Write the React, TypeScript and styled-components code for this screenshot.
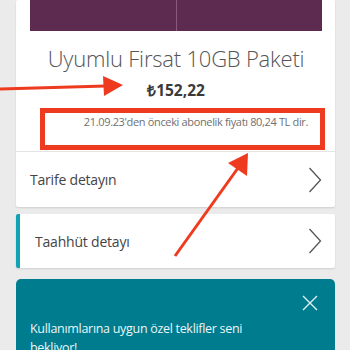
import React from "react";
import styled, { createGlobalStyle } from "styled-components";

const GlobalStyle = createGlobalStyle`
  html, body {
    margin: 0;
    padding: 0;
    background: #ebebeb;
    font-family: "Open Sans", "Liberation Sans", sans-serif;
  }
`;

const Page = styled.div`
  position: relative;
  width: 350px;
  height: 350px;
  overflow: hidden;
  padding: 0 15px 0 16px;
  box-sizing: border-box;
  display: flex;
  flex-direction: column;
`;

const Card = styled.div<{ $accent?: boolean }>`
  background: #fff;
  border-radius: 2px;
  box-shadow: 0 1px 2px rgba(0, 0, 0, 0.12);
  border-left: ${(p) => (p.$accent ? "4px solid #12a2b6" : "0")};
`;

const PackageTop = styled.div`
  padding: 0 13px 0 14px;
  display: flex;
  flex-direction: column;
  align-items: center;
  border-bottom: 1px solid #e4e4e4;
  height: 152px;
  box-sizing: border-box;
`;

const Banner = styled.div`
  align-self: stretch;
  height: 31px;
  display: flex;
  gap: 1px;
  background: #8a5a7e;
`;

const BannerHalf = styled.div`
  flex: 1;
  background: #5d2a50;
`;

const Title = styled.h1`
  margin: 12px 0 0;
  font-size: 22px;
  font-weight: 300;
  color: #555;
  line-height: 30px;
  letter-spacing: -0.2px;
`;

const Price = styled.div`
  margin-top: 6px;
  font-size: 15.5px;
  font-weight: 700;
  color: #3a3a3a;
  line-height: 22px;
`;

const OldPrice = styled.div`
  margin-top: 13px;
  align-self: flex-end;
  margin-right: 14px;
  font-size: 11px;
  color: #707070;
  line-height: 16px;
  letter-spacing: -0.35px;
`;

const Row = styled.div<{ $h: number; $pad: number }>`
  height: ${(p) => p.$h}px;
  display: flex;
  align-items: center;
  justify-content: space-between;
  padding: 0 13px 0 ${(p) => p.$pad}px;
  font-size: 14px;
  color: #444;
  letter-spacing: -0.2px;
`;

const Offer = styled.div`
  margin-top: 11px;
  flex: 1;
  background: #007c8f;
  border-radius: 5px 5px 0 0;
  padding: 16px 17px 0 14px;
  display: flex;
  flex-direction: column;
`;

const OfferClose = styled.svg`
  align-self: flex-end;
`;

const OfferText = styled.p`
  margin: 8px 0 0;
  font-size: 12.5px;
  line-height: 19px;
  color: #eaf6f8;
  width: 222px;
  letter-spacing: -0.3px;
`;

const Gap = styled.div<{ $h: number }>`
  height: ${(p) => p.$h}px;
  flex-shrink: 0;
`;

const MarkBox = styled.div`
  position: absolute;
  left: 40px;
  top: 108px;
  width: 285px;
  height: 42px;
  border: 5px solid #ee3b1f;
  box-sizing: border-box;
`;

const Arrow = styled.svg<{ $x: number; $y: number }>`
  position: absolute;
  left: ${(p) => p.$x}px;
  top: ${(p) => p.$y}px;
  z-index: 5;
  overflow: visible;
  pointer-events: none;
`;

function Chevron() {
  return (
    <svg width="14" height="26" viewBox="0 0 14 26">
      <path d="M1.5 1 L12.5 13 L1.5 25" fill="none" stroke="#555" strokeWidth="1.3" />
    </svg>
  );
}

export default function App() {
  return (
    <>
      <GlobalStyle />
      <Page>
        <Card>
          <PackageTop>
            <Banner>
              <BannerHalf />
              <BannerHalf />
            </Banner>
            <Title>Uyumlu Firsat 10GB Paketi</Title>
            <Price>₺152,22</Price>
            <OldPrice>21.09.23'den önceki abonelik fiyatı 80,24 TL dir.</OldPrice>
          </PackageTop>
          <Row $h={55} $pad={14}>
            <span>Tarife detayın</span>
            <Chevron />
          </Row>
        </Card>
        <Gap $h={7} />
        <Card $accent>
          <Row $h={54} $pad={15}>
            <span>Taahhüt detayı</span>
            <Chevron />
          </Row>
        </Card>
        <Offer>
          <OfferClose width="16" height="16" viewBox="0 0 16 16">
            <path d="M1 1 L15 15 M15 1 L1 15" stroke="#dff2f5" strokeWidth="1.4" />
          </OfferClose>
          <OfferText>Kullanımlarına uygun özel teklifler seni bekliyor!</OfferText>
        </Offer>
        <MarkBox />
        <Arrow $x={0} $y={70} width="130" height="35" viewBox="0 0 130 35">
          <path d="M0 17.5 L0 20.5 L106 17.5 L106 14.5 Z" fill="#ee3b1f" />
          <path d="M103 6 L123 15 L104 26 Z" fill="#ee3b1f" />
        </Arrow>
        <Arrow $x={170} $y={150} width="85" height="110" viewBox="0 0 85 110">
          <path d="M5 106 L68 18" stroke="#ee3b1f" strokeWidth="3" fill="none" />
          <path d="M78 3 L77 26 L58 13 Z" fill="#ee3b1f" />
        </Arrow>
      </Page>
    </>
  );
}
